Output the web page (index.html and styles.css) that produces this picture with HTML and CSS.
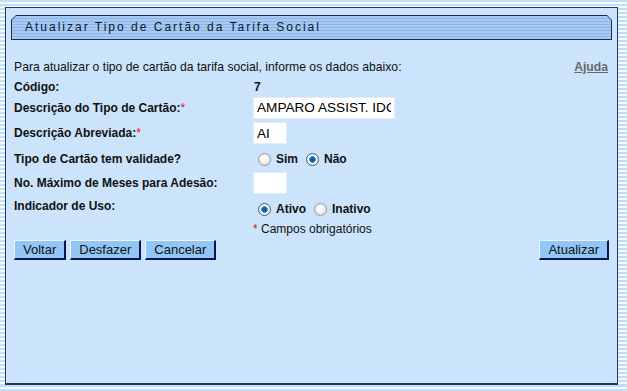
FILE: index.html
```html
<!DOCTYPE html>
<html lang="pt-BR">
<head>
  <meta charset="UTF-8">
  <title>Atualizar Tipo de Cartão da Tarifa Social</title>
  <link rel="stylesheet" href="styles.css">
</head>
<body>
  <div class="panel">
    <div class="title_bar">
      <div class="title_inner">Atualizar Tipo de Cartão da Tarifa Social</div>
    </div>

    <form class="form_box">
      <div class="intro">
        <span>Para atualizar o tipo de cartão da tarifa social, informe os dados abaixo:</span>
        <a href="#" class="help">Ajuda</a>
      </div>

      <div class="form_grid">
        <span class="label">Código:</span>
        <span class="value_bold">7</span>

        <label class="label" for="descricao">Descrição do Tipo de Cartão:<span class="req">*</span></label>
        <div><input type="text" id="descricao" class="field field_wide" value="AMPARO ASSIST. IDOSO"></div>

        <label class="label" for="abreviada">Descrição Abreviada:<span class="req">*</span></label>
        <div><input type="text" id="abreviada" class="field field_small" value="AI"></div>

        <span class="label">Tipo de Cartão tem validade?</span>
        <div class="radio_group">
          <input type="radio" name="validade" id="sim"><label for="sim">Sim</label>
          <input type="radio" name="validade" id="nao" checked><label for="nao">Não</label>
        </div>

        <label class="label" for="meses">No. Máximo de Meses para Adesão:</label>
        <div><input type="text" id="meses" class="field field_small"></div>

        <span class="label label_top">Indicador de Uso:</span>
        <div class="radio_group radio_low">
          <input type="radio" name="uso" id="ativo" checked><label for="ativo">Ativo</label>
          <input type="radio" name="uso" id="inativo"><label for="inativo">Inativo</label>
        </div>

        <span></span>
        <span class="note"><span class="req">*</span> Campos obrigatórios</span>
      </div>

      <div class="actions">
        <div class="actions_left">
          <button type="button" class="button">Voltar</button>
          <button type="button" class="button">Desfazer</button>
          <button type="button" class="button">Cancelar</button>
        </div>
        <button type="button" class="button">Atualizar</button>
      </div>
    </form>
  </div>
</body>
</html>
```

FILE: styles.css
```css
body {
  margin: 0;
  padding: 7px 0 0 5px;
  font-family: "Liberation Sans", Arial, sans-serif;
  font-size: 12px;
  color: #111;
  background: repeating-linear-gradient(to bottom, #bfe0f4 0 2px, #f4faff 2px 4px);
}
.panel {
  box-sizing: border-box;
  width: 613px;
  height: 378px;
  padding: 7px 8px 0 8px;
  background-color: #cbe4fc;
  border: 1px solid #23395e;
  border-bottom-width: 2px;
}
.title_bar {
  margin: 0 -3px;
  padding: 1px;
  background-color: #1c2e50;
  clip-path: polygon(5px 0, calc(100% - 5px) 0, 100% 5px, 100% 100%, 0 100%, 0 5px);
}
.title_inner {
  height: 23px;
  line-height: 23px;
  padding-left: 13px;
  font-size: 12px;
  letter-spacing: 2px;
  color: #0b1630;
  background: repeating-linear-gradient(to bottom, #a8caf2 0 2px, #8cb6ea 2px 3px);
  clip-path: polygon(4px 0, calc(100% - 4px) 0, 100% 4px, 100% 100%, 0 100%, 0 4px);
}
.form_box {
  margin: 0;
}
.intro {
  display: flex;
  justify-content: space-between;
  height: 16px;
  line-height: 16px;
  margin-top: 19px;
  font-size: 12.2px;
}
.help {
  color: #6a6a6a;
  font-weight: bold;
  text-decoration: underline;
  margin-right: 1px;
}
.form_grid {
  display: grid;
  grid-template-columns: 239px 1fr;
  grid-template-rows: 19px 23px 28px 24px 24px 24px 20px;
  align-items: center;
  margin-top: 2px;
}
.label {
  font-weight: bold;
}
.label_top {
  margin-top: -3px;
}
.req {
  color: #e01010;
  font-weight: normal;
}
.value_bold {
  font-weight: bold;
  padding-left: 1px;
}
.field {
  box-sizing: border-box;
  height: 22px;
  margin: 0;
  padding: 0 3px;
  font-family: "Liberation Sans", Arial, sans-serif;
  font-size: 13.6px;
  color: #000;
  background: #fff;
  border: 1px solid #e4eef8;
  outline: none;
  vertical-align: middle;
}
.field_wide {
  width: 142px;
}
.field_small {
  width: 34px;
}
.radio_group {
  display: flex;
  align-items: center;
  font-weight: bold;
}
.radio_low {
  margin-top: 4px;
}
.radio_group input {
  appearance: none;
  box-sizing: border-box;
  width: 13px;
  height: 13px;
  margin: 0 5px 0 5px;
  border: 1px solid #9a9a9a;
  border-radius: 50%;
  background: radial-gradient(circle at 45% 40%, #ffffff 0 2px, #e2e2e2 6px);
}
.radio_group input:checked {
  border-color: #4a5a6a;
  background: radial-gradient(circle, #0e5fa8 0 2px, #3d93d6 3px, #e6eef6 3.6px, #f4f4f4 6px);
}
.radio_group label {
  margin-right: 3px;
}
.note {
  padding-left: 0;
}
.actions {
  display: flex;
  justify-content: space-between;
  margin-top: 1px;
}
.actions_left {
  display: flex;
  gap: 4px;
}
.button {
  height: 20px;
  padding: 0 8px;
  font-family: "Liberation Sans", Arial, sans-serif;
  font-size: 13px;
  color: #111;
  background-color: #92c6f7;
  border: 1px solid #0a1650;
  border-top-color: #eaf4ff;
  border-left-color: #eaf4ff;
  border-right-width: 2px;
  border-bottom-width: 2px;
  cursor: pointer;
}
```
